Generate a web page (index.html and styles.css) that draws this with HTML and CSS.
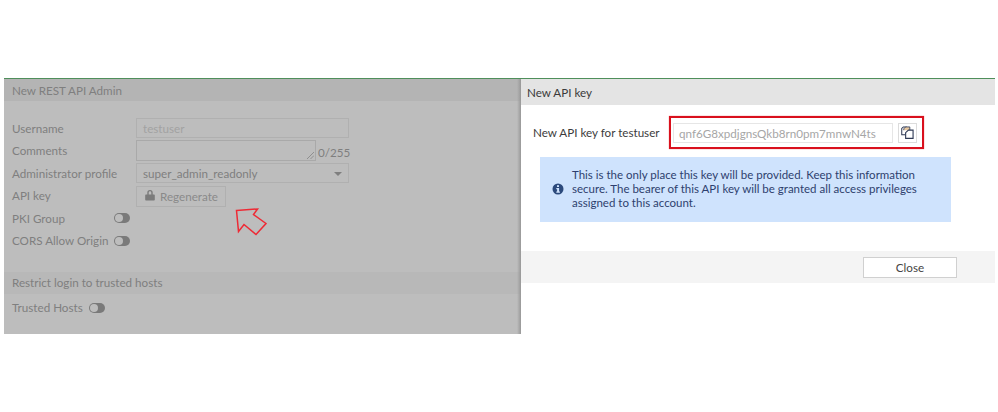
FILE: index.html
```html
<!DOCTYPE html>
<html lang="en">
<head>
<meta charset="utf-8">
<title>New API key</title>
<link rel="stylesheet" href="styles.css">
</head>
<body>
<div class="app">
  <section class="left">
    <header class="left-head">New REST API Admin</header>
    <div class="form">
      <div class="row"><span class="label">Username</span><span class="field muted">testuser</span></div>
      <div class="row"><span class="label">Comments</span><span class="area"><svg class="grip" viewBox="0 0 7 7" width="7" height="7"><path d="M0 7 7 0M3.5 7 7 3.5" stroke="#8f8f8f" fill="none"/></svg></span><span class="count">0/255</span></div>
      <div class="row"><span class="label">Administrator profile</span><span class="field select">super_admin_readonly<i class="caret"></i></span></div>
      <div class="row"><span class="label">API key</span><span class="regen"><svg viewBox="0 0 10 12" width="10" height="12"><path d="M1 5.5h8a.8.8 0 0 1 .8.8v4.4a.8.8 0 0 1-.8.8H1a.8.8 0 0 1-.8-.8V6.3A.8.8 0 0 1 1 5.5ZM2.3 5.5V3.6a2.7 2.7 0 0 1 5.4 0v1.9H6.3V3.6a1.3 1.3 0 0 0-2.6 0v1.9Z" fill="#7b7b7b"/></svg>Regenerate</span></div>
      <div class="row"><span class="label wide">PKI Group</span><span class="toggle"></span></div>
      <div class="row"><span class="label wide">CORS Allow Origin</span><span class="toggle"></span></div>
    </div>
    <div class="band">Restrict login to trusted hosts</div>
    <div class="trusted"><span>Trusted Hosts</span><span class="toggle"></span></div>
    <svg class="arrow" viewBox="0 0 34 32" width="34" height="32"><path d="M1.5 2.5 22.5 1 18.5 6.5 31 15.5 21 26.5 9 16.500 3.500 23.500Z" fill="none" stroke="#ee2a35" stroke-width="1.500"/></svg>
  </section>
  <section class="right">
    <header class="right-head">New API key</header>
    <div class="key-line">
      <span class="key-label">New API key for testuser</span>
      <div class="key-box">
        <span class="key-input">qnf6G8xpdjgnsQkb8rn0pm7mnwN4ts</span>
        <span class="copy"><svg viewBox="0 0 14 14" width="13" height="13"><path d="M5.500 3.200V1H2.500L.8 2.700V9.500H4.500" fill="#fff" stroke="#2f3a55" stroke-width="1.100"/><path d="M3 4.500V3L5 1H9.500V4.500" fill="#e9c9a0" stroke="#2f3a55" stroke-width=".9"/><path d="M8 4.500H13V13.300H5V7.200Z" fill="#fff" stroke="#2f3a55" stroke-width="1.200"/></svg></span>
      </div>
    </div>
    <div class="notice">
      <svg class="info" viewBox="0 0 12 12" width="12" height="12"><circle cx="6" cy="6" r="5.500" fill="#2c4a7c"/><rect x="5" y="2.200" width="2" height="1.800" fill="#cfe3fd"/><path d="M4.300 5h2.800v3.500h.8v1.200H4.300V8.500h.8V6.200h-.8Z" fill="#cfe3fd"/></svg>
      <p>This is the only place this key will be provided. Keep this information secure. The bearer of this API key will be granted all access privileges assigned to this account.</p>
    </div>
    <footer class="foot"><button class="close" type="button">Close</button></footer>
  </section>
</div>
</body>
</html>
```
FILE: styles.css
```css
* { box-sizing: border-box; }
html, body { margin: 0; background: #fff; }
body {
  width: 998px;
  height: 412px;
  padding: 78px 3px 0 4px;
  font-family: Lato, "Open Sans", sans-serif;
  font-size: 11.650px;
  overflow: hidden;
}
.app {
  display: flex;
  height: 256px;
  border-top: 1px solid #4f8f5b;
}
.left {
  position: relative;
  width: 517px;
  background: #bdbdbd;
  color: #7f7f7f;
}
.left::after {
  content: "";
  position: absolute;
  top: 0;
  right: 0;
  bottom: 0;
  width: 4px;
  background: linear-gradient(to right, transparent, #989898);
}
.left-head {
  height: 22px;
  line-height: 24px;
  padding-left: 8px;
  background: #b4b4b4;
}
.form {
  padding: 16px 0 0 8px;
  display: flex;
  flex-direction: column;
}
.row {
  display: flex;
  align-items: center;
  height: 22.500px;
}
.label { width: 124px; flex: none; }
.label.wide { width: 102px; }
.field {
  width: 213px;
  height: 20px;
  border: 1px solid #b0b0b0;
  padding-left: 6px;
  line-height: 19px;
  display: block;
  position: relative;
}
.muted { color: #a2a2a2; }
.area {
  width: 180px;
  height: 21px;
  border: 1px solid #a9a9a9;
  position: relative;
}
.grip { position: absolute; right: 1px; bottom: 1px; }
.count { margin: 5px 0 0 2px; line-height: 14px; width: 31px; }
.caret {
  position: absolute;
  right: 6px;
  top: 8px;
  border: 4px solid transparent;
  border-top: 4px solid #7f7f7f;
  border-bottom: 0;
}
.regen {
  width: 90px;
  height: 21px;
  margin-top: 1px;
  border: 1px solid #b0b0b0;
  display: flex;
  align-items: center;
  gap: 5px;
  padding-left: 8px;
  color: #8a8a8a;
}
.regen svg { margin-top: -2px; }
.toggle {
  width: 16px;
  height: 10px;
  flex: none;
  border-radius: 5px;
  background: #7a7a7a;
  position: relative;
}
.toggle::after {
  content: "";
  position: absolute;
  left: 1px;
  top: 1px;
  width: 8px;
  height: 8px;
  border-radius: 50%;
  background: #bdbdbd;
}
.band {
  height: 22px;
  margin-top: 20px;
  line-height: 21px;
  padding-left: 8px;
  background: #b8b8b8;
}
.trusted {
  display: flex;
  align-items: center;
  gap: 6px;
  padding: 0 0 0 8px;
  height: 27px;
}
.arrow { position: absolute; left: 231px; top: 129px; }
.right {
  flex: 1;
  background: #fff;
  color: #333;
}
.right-head {
  height: 26px;
  line-height: 27px;
  padding-left: 6px;
  background: #e4e4e4;
  color: #3a3a3a;
}
.key-line {
  display: flex;
  align-items: center;
  padding: 11px 0 0 12px;
}
.key-label { width: 136px; flex: none; color: #3c3c3c; }
.key-box {
  width: 255px;
  height: 33px;
  border: 2px solid #d9101d;
  box-shadow: 0 0 1px #e66;
  display: flex;
  align-items: center;
  padding-left: 2px;
  gap: 5px;
}
.key-input {
  width: 220px;
  height: 20px;
  border: 1px solid #e6e6e6;
  padding-left: 5px;
  line-height: 19px;
  color: #a6a6a6;
}
.copy {
  width: 19px;
  height: 20px;
  border: 1px solid #dcdcdc;
  display: flex;
  align-items: center;
  justify-content: center;
}
.notice {
  width: 411px;
  height: 65px;
  margin: 8px 0 0 19px;
  padding: 11px 12px 0 12px;
  background: #cfe3fd;
  color: #2e3f6e;
  display: flex;
  align-items: flex-start;
  gap: 8px;
}
.info { flex: none; margin-top: 15px; }
.notice p { margin: 0; line-height: 14px; font-size: 11.500px; }
.foot {
  height: 32px;
  margin-top: 29px;
  background: #f4f4f4;
  display: flex;
  justify-content: flex-end;
  align-items: center;
  padding-right: 38px;
}
.close {
  width: 94px;
  height: 21px;
  padding: 0;
  background: #fff;
  border: 1px solid #d0d0d0;
  font: inherit;
  color: #444;
}
```
